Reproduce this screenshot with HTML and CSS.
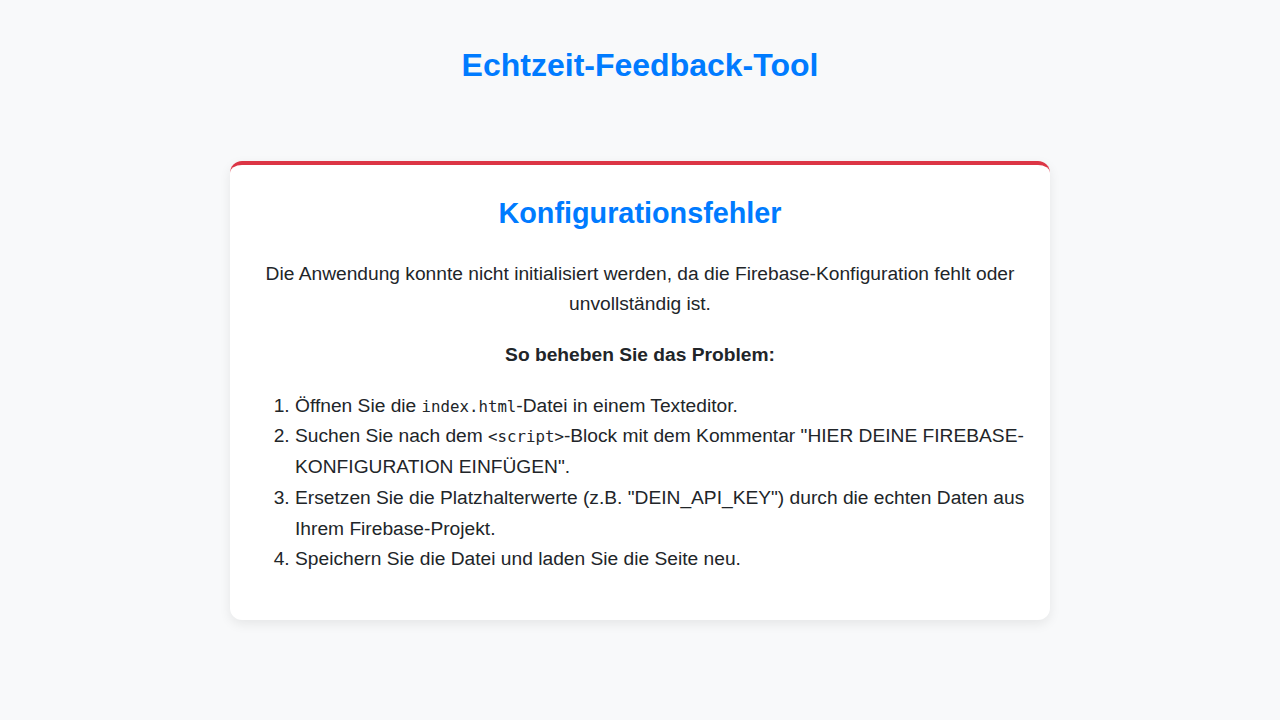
FILE: index.html
```html
<!DOCTYPE html>
<html lang="de">
<head>
<meta charset="utf-8">
<title>Echtzeit-Feedback-Tool</title>
<link rel="stylesheet" href="styles.css">
</head>
<body>
<header class="header">
  <h1 class="title">Echtzeit-Feedback-Tool</h1>
</header>
<main class="main">
  <section class="card">
    <h2 class="card-title">Konfigurationsfehler</h2>
    <p class="lead">Die Anwendung konnte nicht initialisiert werden, da die Firebase-Konfiguration fehlt oder unvollständig ist.</p>
    <p class="lead strong">So beheben Sie das Problem:</p>
    <ol class="steps">
      <li>Öffnen Sie die <code>index.html</code>-Datei in einem Texteditor.</li>
      <li>Suchen Sie nach dem <code>&lt;script&gt;</code>-Block mit dem Kommentar "HIER DEINE FIREBASE-KONFIGURATION EINFÜGEN".</li>
      <li>Ersetzen Sie die Platzhalterwerte (z.B. "DEIN_API_KEY") durch die echten Daten aus Ihrem Firebase-Projekt.</li>
      <li>Speichern Sie die Datei und laden Sie die Seite neu.</li>
    </ol>
  </section>
</main>
</body>
</html>
```
FILE: styles.css
```css
html, body {
  margin: 0;
  padding: 0;
}
body {
  background: #f8f9fa;
  color: #212529;
  font-family: "Liberation Sans", Arial, sans-serif;
  font-size: 19.2px;
  line-height: 1.6;
}
.header {
  padding: 40px 20px 0;
  text-align: center;
}
.title {
  margin: 0;
  color: #007bff;
  font-size: 32px;
  line-height: 50px;
  font-weight: 700;
}
.main {
  display: flex;
  justify-content: center;
  padding: 71px 20px 40px;
}
.card {
  width: 820px;
  box-sizing: border-box;
  background: #fff;
  border-top: 4px solid #dc3545;
  border-radius: 12px;
  box-shadow: 0 4px 12px rgba(0, 0, 0, 0.08);
  padding: 31px 24px 25px;
}
.card-title {
  margin: 0 0 28px;
  text-align: center;
  color: #007bff;
  font-size: 28.8px;
  line-height: 1.2;
}
.lead {
  margin: 0 0 20px;
  text-align: center;
}
.strong {
  font-weight: 700;
}
.steps {
  margin: 0 0 20px;
  padding-left: 41px;
}
code {
  font-family: "DejaVu Sans Mono", monospace;
  font-size: 0.82em;
}
```
